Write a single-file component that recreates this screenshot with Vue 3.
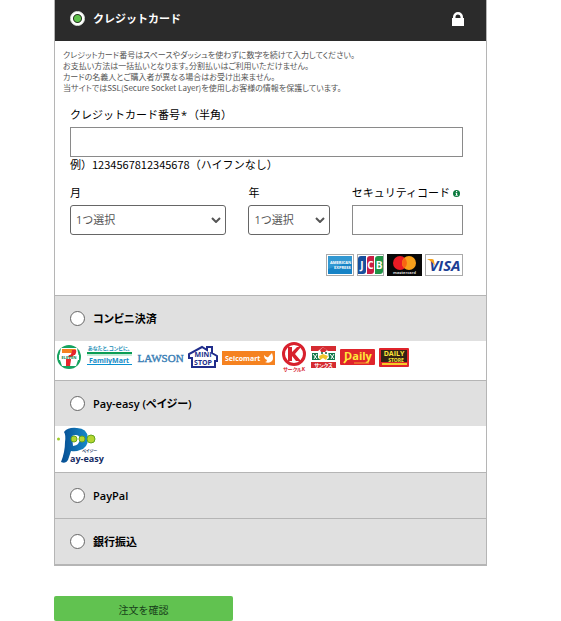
<template>
  <form class="payment" @submit.prevent>
    <div class="payment-list">
      <section class="method active">
        <div class="method-header">
          <label class="method-label">
            <input v-model="method" type="radio" name="method" value="card" />
            <span>クレジットカード</span>
          </label>
          <svg class="lock" viewBox="0 0 14 14" aria-hidden="true">
            <path d="M1 6h1V5a5 5 0 0 1 10 0v1h1v8H1z M4.500 6h5V5a2.500 2.500 0 0 0-5 0z" fill="#fff" fill-rule="evenodd" />
          </svg>
        </div>

        <div class="card-form">
          <p class="notes">
            クレジットカード番号はスペースやダッシュを使わずに数字を続けて入力してください。<br />
            お支払い方法は一括払いとなります。分割払いはご利用いただけません。<br />
            カードの名義人とご購入者が異なる場合はお受け出来ません。<br />
            当サイトではSSL(Secure Socket Layer)を使用しお客様の情報を保護しています。
          </p>

          <div class="fields">
            <div class="field">
              <label for="card-number">クレジットカード番号<span class="required">*</span>（半角）</label>
              <input id="card-number" v-model="cardNumber" class="box" type="text" inputmode="numeric" />
              <p class="hint">例）1234567812345678（ハイフンなし）</p>
            </div>

            <div class="field-row">
              <div class="field">
                <label for="month">月</label>
                <div class="select-wrap">
                  <select id="month" v-model="month" class="box">
                    <option value="">1つ選択</option>
                    <option v-for="m in months" :key="m" :value="m">{{ m }}</option>
                  </select>
                  <svg class="chevron" viewBox="0 0 10 6" aria-hidden="true">
                    <path d="M1 1l4 4 4-4" fill="none" stroke="#555" stroke-width="2" />
                  </svg>
                </div>
              </div>
              <div class="field">
                <label for="year">年</label>
                <div class="select-wrap">
                  <select id="year" v-model="year" class="box">
                    <option value="">1つ選択</option>
                    <option v-for="y in years" :key="y" :value="y">{{ y }}</option>
                  </select>
                  <svg class="chevron" viewBox="0 0 10 6" aria-hidden="true">
                    <path d="M1 1l4 4 4-4" fill="none" stroke="#555" stroke-width="2" />
                  </svg>
                </div>
              </div>
              <div class="field">
                <label for="code">
                  セキュリティコード
                  <svg class="info" viewBox="0 0 7 7" aria-hidden="true">
                    <circle cx="3.500" cy="3.500" r="3.500" fill="#0b7a3e" />
                    <path d="M3 1h1.200v1H3zM2.500 2.800h1.700v2.200h.6v.8H2.400V5H3V3.600h-.5z" fill="#fff" />
                  </svg>
                </label>
                <input id="code" v-model="code" class="box" type="text" inputmode="numeric" />
              </div>
            </div>

            <div class="brands">
              <svg width="28" height="22" viewBox="0 0 28 22">
                <rect x=".5" y=".5" width="27" height="21" fill="#fff" stroke="#aaa" />
                <rect x="2" y="2" width="24" height="18" fill="#1683c6" />
                <path d="M2 2h24v5L2 15z" fill="#3298d2" />
                <g class="logo-text" font-size="4" font-weight="700" fill="#fff">
                  <text x="4" y="10">AMERICAN</text>
                  <text x="8" y="15">EXPRESS</text>
                </g>
              </svg>
              <svg width="27" height="22" viewBox="0 0 27 22">
                <rect x=".5" y=".5" width="26" height="21" fill="#fff" stroke="#aaa" />
                <path d="M4 2h5v15q0 3-3 3H1V5q0-3 3-3z" fill="#174f9d" />
                <path d="M13 2h4v15q0 3-3 3h-4V5q0-3 3-3z" fill="#c81e44" />
                <path d="M21 2h5v15q0 3-3 3h-5V5q0-3 3-3z" fill="#209447" />
                <g class="logo-text" font-size="10" font-weight="700" text-anchor="middle" fill="#fff">
                  <text x="5" y="15">J</text><text x="13.500" y="15">C</text><text x="22" y="15">B</text>
                </g>
              </svg>
              <svg width="35" height="22" viewBox="0 0 35 22">
                <rect width="35" height="22" fill="#080808" />
                <circle cx="13" cy="9" r="7" fill="#e91b24" />
                <circle cx="22" cy="9" r="7" fill="#f8a01b" />
                <path d="M17.500 3.700a7 7 0 0 1 0 10.600 7 7 0 0 1 0-10.600z" fill="#f96512" />
                <text x="17.500" y="20" class="logo-text" font-size="4" font-weight="700" text-anchor="middle" fill="#ddd">mastercard</text>
              </svg>
              <svg width="38" height="22" viewBox="0 0 38 22">
                <rect x=".5" y=".5" width="37" height="21" fill="#fff" stroke="#aaa" />
                <text x="20" y="17" class="logo-text" font-size="15" font-weight="700" font-style="italic" text-anchor="middle" fill="#1c3e94">VISA</text>
                <path d="M2 5h5q2 0 2 2l1 5Q7 7 2 5z" fill="#f5a11b" />
              </svg>
            </div>
          </div>
        </div>
      </section>

      <section class="method">
        <div class="method-header">
          <label class="method-label">
            <input v-model="method" type="radio" name="method" value="store" />
            <span>コンビニ決済</span>
          </label>
        </div>
        <div class="stores">
          <svg width="27" height="30" viewBox="0 0 27 30">
            <circle cx="12" cy="15" r="12" fill="#16a35f" />
            <path d="M4 6h16l2 9-3 9H5l-3-9z" fill="#fff" />
            <path d="M5 7h14l-2 4H5z" fill="#f58220" />
            <path d="M15 8h4q1 3-2 6h-5q3-2 3-6z" fill="#e7262c" />
            <path d="M9 18h5l-1 6H9z" fill="#e7262c" />
            <path d="M2 13h20v5H2z" fill="#fff" />
            <path d="M12 13h5l-2 2h-4zM9 17h5v1H9z" fill="#e7262c" />
            <text x="12" y="17" class="logo-text" font-size="4" font-weight="700" text-anchor="middle" fill="#078349">ELEVEN</text>
          </svg>
          <svg width="46" height="30" viewBox="0 0 46 30">
            <text x="22" y="8" class="logo-text" font-size="5" font-weight="700" text-anchor="middle" fill="#168bb5">あなたと、コンビに、</text>
            <path d="M0 10h45v2H0z" fill="#0b9d55" />
            <path d="M0 12h45v2H0z" fill="#c8ebd9" />
            <path d="M0 22h45v1H0z" fill="#0991d1" />
            <text x="22" y="21" class="logo-text" font-size="7" font-weight="700" text-anchor="middle" fill="#168bc5">FamilyMart</text>
          </svg>
          <svg width="49" height="30" viewBox="0 0 49 30">
            <text x="24.500" y="20" class="serif-text" font-size="11" text-anchor="middle" fill="#397eb5" stroke="#397eb5" stroke-width=".4">LAWSON</text>
          </svg>
          <svg width="30" height="30" viewBox="0 0 30 30">
            <path d="M4 25V16H1v-4L14 5l5 3V5h5v6l5 3v5h-2v6z" fill="#fff" stroke="#202d8b" stroke-width="2" />
            <g class="logo-text" font-size="7" font-weight="700" text-anchor="middle" fill="#202d8b">
              <text x="15" y="15">MINI</text>
              <text x="15" y="23">STOP</text>
            </g>
          </svg>
          <svg width="55" height="30" viewBox="0 0 55 30">
            <rect x="1" y="9" width="53" height="14" fill="#f58220" />
            <text x="4" y="19" class="logo-text" font-size="7" font-weight="700" fill="#fff">Seicomart</text>
            <path d="M43 13q4 4 5 1l3-3q2 6 0 8-3 3-7 1 2 0 2-2-3-1-3-5z" fill="#fff" />
          </svg>
          <svg width="29" height="30" viewBox="0 0 29 30">
            <circle cx="15" cy="12" r="10.500" fill="#fff" stroke="#d8212d" stroke-width="3" />
            <path d="M9 5h4v5l5-5h4l-6 7 6 7h-5l-4-5v5H9z" fill="#d8212d" />
            <text x="15" y="29" class="logo-text" font-size="5" font-weight="700" text-anchor="middle" fill="#d8212d">サークルK</text>
          </svg>
          <svg width="26" height="30" viewBox="0 0 26 30">
            <path d="M0 4h25v5H0zM0 20h25v6H0z" fill="#d52b31" />
            <path d="M1 11h23v7H1z" fill="#14784b" />
            <path d="M2 12l4 5m0-5l-3 5m16-5l4 5m0-5l-3 5" stroke="#fff" />
            <path d="M7 9l5-4 5 4 1 7-5 4-6-4z" fill="#fff" />
            <path d="M9 8l3-3 4 3-2 2h-4z" fill="#d52b31" />
            <path d="M8 14l4-2 5 2-2 4-3-2-3 2z" fill="#f0c52c" />
            <circle cx="11" cy="11" r="1" fill="#145d3b" /><circle cx="15" cy="11" r="1" fill="#145d3b" />
            <text x="12.500" y="25" class="logo-text" font-size="5" font-weight="700" text-anchor="middle" fill="#fff">サンクス</text>
          </svg>
          <svg width="36" height="30" viewBox="0 0 36 30">
            <rect y="7" width="35" height="16" rx="1" fill="#df242b" />
            <text x="18" y="18" class="logo-text" font-size="11" font-weight="700" text-anchor="middle" fill="#ffe83a">Daily</text>
            <path d="M14 21h15" stroke="#f9a52e" />
            <path d="M7 17l-3 4" stroke="#ffe83a" stroke-width="2" />
          </svg>
          <svg width="30" height="30" viewBox="0 0 30 30">
            <rect y="6" width="30" height="19" rx="1" fill="#df242b" />
            <path d="M2 8h26v12H2z" fill="#322315" />
            <g class="logo-text" font-weight="700" text-anchor="middle" fill="#ffe83a">
              <text x="15" y="14" font-size="7">DAILY</text>
              <text x="17" y="20" font-size="5">STORE</text>
            </g>
            <path d="M3 22h25" stroke="#f5ca26" stroke-width="2" />
          </svg>
        </div>
      </section>

      <section class="method">
        <div class="method-header">
          <label class="method-label">
            <input v-model="method" type="radio" name="method" value="payeasy" />
            <span>Pay-easy (ペイジー)</span>
          </label>
        </div>
        <div class="payeasy">
          <svg width="48" height="38" viewBox="0 0 48 38">
            <defs>
              <linearGradient id="pe" x1="0" x2="1">
                <stop offset="0" stop-color="#064c91" />
                <stop offset="1" stop-color="#168ac9" />
              </linearGradient>
            </defs>
            <path d="M7 5q4-5 13-4 10 0 11 10 0 10-8 12-4 2-9 1l-3 9q-2 4-7 2 4-10 4-20 1-7-1-10z" fill="url(#pe)" />
            <path d="M15 9q6-3 8 2 0 7-7 8z" fill="#fff" />
            <circle cx="1.500" cy="12" r="1.500" fill="#9dca28" />
            <circle cx="17" cy="12" r="3" fill="#b4d530" stroke="#63a51d" />
            <circle cx="25" cy="12" r="3" fill="#b4d530" stroke="#63a51d" />
            <circle cx="34" cy="12" r="4" fill="#b4d530" stroke="#63a51d" />
            <text x="25" y="26" class="logo-text" font-size="4" font-weight="700" fill="#18315f">ペイジー</text>
            <text x="13" y="35" class="logo-text" font-size="9" font-weight="700" fill="#142b63">ay-easy</text>
          </svg>
        </div>
      </section>

      <section class="method">
        <div class="method-header">
          <label class="method-label">
            <input v-model="method" type="radio" name="method" value="paypal" />
            <span>PayPal</span>
          </label>
        </div>
      </section>

      <section class="method">
        <div class="method-header">
          <label class="method-label">
            <input v-model="method" type="radio" name="method" value="bank" />
            <span>銀行振込</span>
          </label>
        </div>
      </section>
    </div>

    <button class="submit" type="submit">注文を確認</button>
  </form>
</template>

<script setup>
import { ref } from 'vue'

const method = ref('card')
const cardNumber = ref('')
const month = ref('')
const year = ref('')
const code = ref('')

const months = Array.from({ length: 12 }, (_, i) => i + 1)
const years = Array.from({ length: 10 }, (_, i) => 2021 + i)
</script>

<style>
body {
  margin: 0;
  background: #fff;
}
</style>

<style scoped>
.payment {
  padding: 0 74px 0 54px;
  font-family: "Open Sans", "Noto Sans CJK JP", sans-serif;
  font-size: 11px;
  line-height: 16px;
  color: #000;
}

.payment * {
  box-sizing: border-box;
}

.payment svg {
  display: block;
  flex: none;
}

.payment-list {
  border: 1px solid #b5b5b5;
  border-top: 0;
  border-bottom-width: 2px;
}

.method + .method {
  border-top: 1px solid #b5b5b5;
}

.method-header {
  display: flex;
  align-items: center;
  justify-content: space-between;
  height: 45px;
  padding: 0 21px 0 15px;
  background: #e0e0e0;
  font-feature-settings: "palt";
}

.active .method-header {
  height: 41px;
  padding-bottom: 4px;
  background: #2b2b2b;
  color: #fff;
  font-feature-settings: normal;
}

.method-label {
  display: flex;
  align-items: center;
  gap: 8px;
  font-weight: 600;
}

.method-label input {
  appearance: none;
  width: 15px;
  height: 15px;
  margin: 0;
  border: 1px solid #666;
  border-radius: 50%;
  background: #fff;
}

.method-label input:checked {
  border-color: #e8eee8;
  background: radial-gradient(circle, #5fc24c 0 3px, #26391f 4px, #fff 5px);
}

.lock {
  width: 14px;
  height: 14px;
}

.card-form {
  padding: 8px 8px 19px;
}

.notes {
  margin: 0 0 14px;
  font-family: "Noto Sans CJK JP", sans-serif;
  font-size: 8px;
  line-height: 11px;
  color: #555;
  font-feature-settings: "palt";
}

.fields {
  padding: 0 15px 0 7px;
}

.field {
  min-width: 0;
}

.field label {
  display: flex;
  align-items: center;
  margin-bottom: 4px;
  white-space: nowrap;
}

.required {
  padding: 0 1px;
}

.box {
  display: block;
  width: 100%;
  height: 30px;
  margin: 0;
  padding: 0 5px;
  border: 1px solid #8a8a8a;
  border-radius: 0;
  background: #fff;
  color: #555;
  font: inherit;
}

.hint {
  margin: 0;
  font-family: "Noto Sans CJK JP", sans-serif;
  line-height: 14px;
}

.field-row {
  display: grid;
  grid-template-columns: 156fr 81fr 111fr;
  gap: 22px;
  margin-top: 14px;
}

.select-wrap {
  display: grid;
  align-items: center;
}

.select-wrap > * {
  grid-area: 1 / 1;
}

.select-wrap .box {
  appearance: none;
  border-color: #666;
  border-radius: 3px;
}

.chevron {
  justify-self: end;
  width: 10px;
  height: 6px;
  margin-right: 5px;
  pointer-events: none;
}

.info {
  width: 7px;
  height: 7px;
  margin-left: 3px;
}

.brands {
  display: flex;
  justify-content: flex-end;
  gap: 3px;
  margin-top: 19px;
}

.stores {
  display: flex;
  gap: 3px;
  padding: 1px 2px 8px;
}

.payeasy {
  padding: 1px 2px 7px;
}

.logo-text {
  font-family: "Open Sans", "Noto Sans CJK JP", sans-serif;
  font-feature-settings: "palt";
}

.serif-text {
  font-family: "Liberation Serif", serif;
}

.submit {
  display: block;
  width: 179px;
  margin-top: 30px;
  padding: 6px 0 3px;
  border: 0;
  border-radius: 2px;
  background: #61c250;
  color: #17401a;
  font: inherit;
  font-size: 10px;
  line-height: 16px;
}
</style>
